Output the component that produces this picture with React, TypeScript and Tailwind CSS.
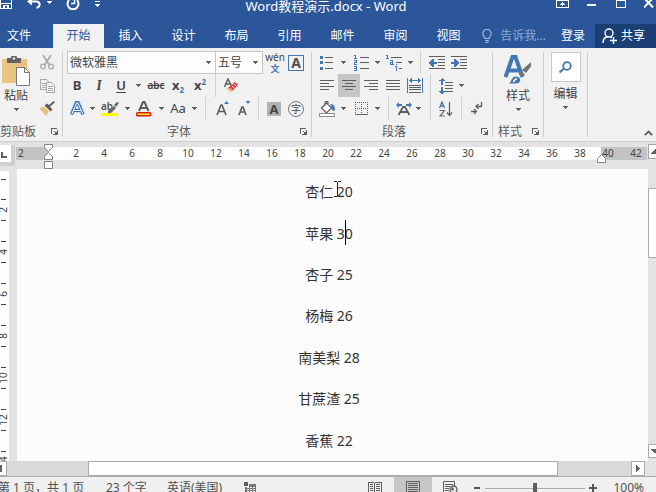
import { ReactNode } from "react";
import clsx from "clsx";

const tabs = ["开始", "插入", "设计", "布局", "引用", "邮件", "审阅", "视图"];

const lines = ["杏仁 20", "苹果 30", "杏子 25", "杨梅 26", "南美梨 28", "甘蔗渣 25", "香蕉 22"];

const rulerMarks = Array.from({ length: 21 }, (_, i) => (i + 1) * 2);
const sideMarks = [2, 4, 6, 8, 10, 12, 14];

const G = "#5f5f5f";
const B = "#4478b4";

function Icon({ w, h, crisp, children }: { w: number; h: number; crisp?: boolean; children: ReactNode }) {
  return (
    <svg
      width={w}
      height={h}
      viewBox={`0 0 ${w} ${h}`}
      fill="none"
      className="shrink-0"
      shapeRendering={crisp ? "crispEdges" : undefined}
    >
      {children}
    </svg>
  );
}

function Tool({ label, className, children }: { label: string; className: string; children: ReactNode }) {
  return (
    <button type="button" aria-label={label} className={clsx("flex h-full shrink-0 items-center justify-center", className)}>
      {children}
    </button>
  );
}

function Caret() {
  return (
    <Icon w={5} h={3} crisp>
      <path d="M0 0h5v1H0zM1 1h3v1H1zM2 2h1v1H2z" fill={G} />
    </Icon>
  );
}

function More({ className }: { className: string }) {
  return (
    <Tool label="更多" className={className}>
      <Caret />
    </Tool>
  );
}

function Split({ className }: { className: string }) {
  return (
    <div className={clsx("flex h-full shrink-0 justify-center", className)}>
      <div className="h-full w-px bg-[#d0d0d0]" />
    </div>
  );
}

function GroupLine() {
  return <div className="mt-px mb-1 w-px shrink-0 bg-[#cdcdcd]" />;
}

function GroupLabel({ name }: { name: string }) {
  return (
    <div className="flex h-[21px] items-center pt-[2px] text-[#5a5a5a]">
      <span className="flex-1 text-center">{name}</span>
      <Tool label={name + "设置"} className="w-4">
        <Icon w={7} h={7} crisp>
          <path d="M0 0h6v1H1v5H0zM3 3h1v1H3zM4 4h1v1H4zM6 2h1v5H2V6h4z" fill={G} />
          <path d="M5 4h1v2H4V5h1z" fill={G} />
        </Icon>
      </Tool>
    </div>
  );
}

function Row({ children }: { children: ReactNode }) {
  return <div className="flex h-[23px] items-center">{children}</div>;
}

function TitleBar() {
  return (
    <div className="relative flex h-6 items-start justify-between text-white">
      <div className="flex">
        <Tool label="保存" className="w-[13px]">
          <Icon w={13} h={10} crisp>
            <path d="M0 0h1v9H0zM11 0h1v9h-1zM0 8h12v1H0zM1 3h10v1H1zM3 5h6v4H7V6H5v3H3z" fill="#fff" />
          </Icon>
        </Tool>
        <Tool label="撤消" className="ml-3.5 w-4">
          <Icon w={16} h={10}>
            <path d="M3 1.500h6c4.500 0 5 5 .5 6.500" stroke="#fff" strokeWidth="2" />
            <path d="M0 1.500l5-4v8z" fill="#fff" />
          </Icon>
        </Tool>
        <Tool label="撤消列表" className="ml-px w-2.5">
          <Icon w={5} h={4} crisp>
            <path d="M0 1h5v1H0zM1 2h3v1H1zM2 3h1v1H2z" fill="#fff" />
          </Icon>
        </Tool>
        <Tool label="重复" className="ml-3 w-3.5">
          <Icon w={14} h={10}>
            <path d="M3 0A5.500 5.500 0 1 0 11 0" stroke="#fff" strokeWidth="2" />
            <path d="M8.500 0v3.500H5" stroke="#fff" strokeWidth="1.600" />
          </Icon>
        </Tool>
        <Tool label="自定义" className="ml-2.5 w-3.5">
          <Icon w={5} h={7} crisp>
            <path d="M0 1h5v1H0zM0 4h5v1H0zM1 5h3v1H1zM2 6h1v1H2z" fill="#fff" />
          </Icon>
        </Tool>
      </div>
      <h1 className="pointer-events-none absolute inset-x-0 top-0 pr-1 text-center text-[13px] leading-[13px]">
        Word教程演示.docx - Word
      </h1>
      <div className="flex items-start">
        <Tool label="功能区显示选项" className="w-[13px]">
          <Icon w={13} h={8} crisp>
            <path d="M0 0h1v8H0zM12 0h1v8h-1zM0 7h13v1H0zM0 0h13v1H0zM6 2h1v4H6zM5 3h3v1H5zM4 4h5v1H4z" fill="#fff" />
          </Icon>
        </Tool>
        <Tool label="最小化" className="ml-[18px] w-[9px]">
          <Icon w={9} h={8} crisp>
            <path d="M0 4h9v2H0z" fill="#fff" />
          </Icon>
        </Tool>
        <Tool label="最大化" className="ml-5 w-2.5">
          <Icon w={10} h={8} crisp>
            <path d="M0 0h1v8H0zM9 0h1v8H9zM0 7h10v1H0zM0 0h10v1H0z" fill="#fff" />
          </Icon>
        </Tool>
        <Tool label="关闭" className="mr-0.5 ml-[18px] w-[10px]">
          <Icon w={10} h={8}>
            <path d="M0-2l9 9.500M9-2L0 7.500" stroke="#fff" strokeWidth="2" />
          </Icon>
        </Tool>
      </div>
    </div>
  );
}

function TabBar() {
  return (
    <div className="flex h-6 items-stretch text-white">
      <button type="button" className="w-[53px] pr-[15px]">文件</button>
      <nav className="flex flex-1">
        {tabs.map((tab, i) => (
          <button
            key={tab}
            type="button"
            className={clsx("shrink-0", i === 0 ? "w-[51px] bg-[#f1f1f2] text-[#2b579a]" : "w-[53px]")}
          >
            {tab}
          </button>
        ))}
      </nav>
      <button type="button" className="flex items-center gap-2 pr-[15px] text-[#8ea9d0]">
        <Icon w={10} h={14}>
          <path d="M3 9.500C3 8 .8 7 .8 4.600a4.200 4.200 0 0 1 8.400 0C9.200 7 7 8 7 9.500zM3 11.500h4M3.500 13.300h3" stroke="#a3b8da" strokeWidth="1.200" />
        </Icon>
        告诉我...
      </button>
      <button type="button" className="pr-[10px]">登录</button>
      <button type="button" className="flex w-[61px] items-center gap-1 bg-[#1b3f75] pl-[7px]">
        <Icon w={15} h={16}>
          <circle cx="7" cy="5" r="4" stroke="#fff" strokeWidth="1.400" />
          <path d="M1 15c0-4 2-6 5-6.200M8 9c1 0 1.500.3 2 .8M8 12.500h7M11.500 9v7" stroke="#fff" strokeWidth="1.400" />
        </Icon>
        共享
      </button>
    </div>
  );
}

function Clipboard() {
  return (
    <section className="-ml-2.5 w-[72px] shrink-0">
      <div className="flex h-[69px] pl-2.5">
        <button type="button" className="flex w-8 shrink-0 flex-col items-center pt-[5px]">
          <Icon w={29} h={30}>
            <rect y="3" width="25" height="24" rx="1" fill="#eac282" />
            <path d="M5 2h4a3 3 0 0 1 6 0h4v5H5z" fill="#646464" />
            <circle cx="12" cy="2.500" r="1.200" fill="#eee" />
            <path d="M14.500 11.500h8l5 5v13h-13z" fill="#fff" stroke="#777" />
            <path d="M22.500 11.500v5h5" stroke="#777" />
          </Icon>
          <span className="mt-[2px] leading-4">粘贴</span>
          <span className="mt-[4px]"><Caret /></span>
        </button>
        <div className="w-[30px] shrink-0">
          <Row>
            <Tool label="剪切" className="w-[30px]">
              <Icon w={14} h={15}>
                <path d="M3 0l6.500 10M11 0L4.500 10" stroke="#a9a9a9" strokeWidth="1.800" />
                <circle cx="3" cy="11.500" r="2.300" stroke="#a9a9a9" strokeWidth="1.300" />
                <circle cx="11" cy="11.500" r="2.300" stroke="#a9a9a9" strokeWidth="1.300" />
              </Icon>
            </Tool>
          </Row>
          <Row>
            <Tool label="复制" className="w-[30px]">
              <Icon w={15} h={14} crisp>
                <path d="M.5.5h6l2 2v8h-8zM2 4.500h4M2 6.500h4M2 8.500h4" stroke="#aaa" />
                <path d="M6.500 3.500h5l3 3v7h-8z" fill="#f4f4f4" stroke="#aaa" />
                <path d="M8 7.500h5M8 9.500h5M8 11.500h5" stroke="#aaa" />
              </Icon>
            </Tool>
          </Row>
          <Row>
            <Tool label="格式刷" className="w-[30px]">
              <Icon w={16} h={15}>
                <path d="M0 7l5-1.500 5 5L7 15z" fill="#eac07c" />
                <path d="M5.500 4.500l6 6 2-2-2.500-3 5-4L14.500 0l-4.500 4-2-1.500z" fill="#5f5f5f" />
              </Icon>
            </Tool>
          </Row>
        </div>
      </div>
      <GroupLabel name="剪贴板" />
    </section>
  );
}

function Combo({ label, value, className }: { label: string; value: string; className: string }) {
  return (
    <label className={clsx("relative block h-full shrink-0", className)}>
      <span className="sr-only">{label}</span>
      <select className="h-full w-full appearance-none border border-[#c6c6c6] bg-[#fdfdfd] pl-[2px] outline-none">
        <option>{value}</option>
      </select>
      <span className="pointer-events-none absolute top-[10px] right-[5px]">
        <Caret />
      </span>
    </label>
  );
}

function FontGroup() {
  return (
    <section className="w-[248px] shrink-0">
      <div className="pl-1">
        <Row>
          <Combo label="字体" value="微软雅黑" className="w-[149px]" />
          <Combo label="字号" value="五号" className="-ml-px w-12" />
          <Tool label="拼音指南" className="w-6 flex-col">
            <span className="text-[10px] leading-[11px] text-[#444]">wén</span>
            <span className="text-[9px] leading-[11px] font-bold text-[#4478b4]">文</span>
          </Tool>
          <Tool label="字符边框" className="w-[18px]">
            <span className="w-4 border border-[#4478b4] text-center text-[14px] leading-[14px] font-bold text-[#505050]">A</span>
          </Tool>
        </Row>
        <Row>
          <Tool label="加粗" className="w-5"><b className="text-[13px]">B</b></Tool>
          <Tool label="倾斜" className="w-6"><span className="font-serif text-[13px] font-bold italic">I</span></Tool>
          <Tool label="下划线" className="w-5"><span className="text-[13px] font-semibold underline underline-offset-2">U</span></Tool>
          <More className="w-[14px]" />
          <Tool label="删除线" className="w-[22px]"><span className="text-[10px] font-semibold line-through">abc</span></Tool>
          <Tool label="下标" className="w-[22px]"><b className="text-[13px]">x</b><span className="mt-2 text-[8px] font-bold text-[#4478b4]">2</span></Tool>
          <Tool label="上标" className="w-[22px]"><b className="text-[13px]">x</b><span className="mb-2 text-[8px] font-bold text-[#4478b4]">2</span></Tool>
          <Split className="w-2" />
          <Tool label="清除格式" className="w-6">
            <Icon w={14} h={15}>
              <path d="M.5 9L4 1l3.500 7M2 6h4" stroke={G} strokeWidth="1.500" />
              <path d="M2 11l3-2 4 4-3 2z" fill="#ecd9b4" />
              <path d="M4 10l7-6 3 3-6 6z" fill="#e33b3b" />
              <path d="M6 10l2 2M8 8l2 2M10 6l2 2" stroke="#fff" />
            </Icon>
          </Tool>
        </Row>
        <Row>
          <Tool label="文本效果" className="w-5">
            <Icon w={15} h={15}>
              <path d="M1.500 13.500l5-12h1.500l5 12M3.800 9.500h7" stroke="#b9d2ee" strokeWidth="4.500" />
              <path d="M1.500 13.500l5-12h1.500l5 12M3.800 9.500h7" stroke="#3b6ea8" strokeWidth="3" />
              <path d="M1.800 13l5-11.300h1l5 11.300M3.800 9.500h7" stroke="#fff" strokeWidth="1" />
            </Icon>
          </Tool>
          <More className="w-[10px]" />
          <Tool label="突出显示" className="w-[26px]">
            <Icon w={18} h={16}>
              <path d="M0 12h17v3H0z" fill="#ff0" />
              <text x="0" y="9" fontSize="10" fontWeight="600" fill="#4f4f4f">ab</text>
              <path d="M7 10l6-5 2 2-5 5H7zM13 4l3-3 2 1-3 4z" fill="#666" />
            </Icon>
          </Tool>
          <More className="w-2" />
          <Tool label="字体颜色" className="w-[26px]">
            <Icon w={16} h={16}>
              <path d="M3 10L7 1h1.500l4 9M5 7h6" stroke={G} strokeWidth="2" />
              <rect x=".7" y="11.700" width="14" height="3" rx="1" fill="#ff0" stroke="#d8151d" strokeWidth="1.400" />
            </Icon>
          </Tool>
          <More className="w-2" />
          <Tool label="更改大小写" className="w-[26px]"><span className="text-[13px]">Aa</span></Tool>
          <More className="w-1.5" />
          <Split className="w-4" />
          <Tool label="增大字号" className="w-5">
            <Icon w={14} h={15}>
              <path d="M1 14L5 4h1l4 10M2.500 10.500h6" stroke={G} strokeWidth="1.700" />
              <path d="M8 3l2.500-3L13 3z" fill={B} />
            </Icon>
          </Tool>
          <Tool label="减小字号" className="w-[22px]">
            <Icon w={13} h={15}>
              <path d="M1 14l3-8h1l3 8M2 11h5" stroke={G} strokeWidth="1.700" />
              <path d="M7.500 0h5L10 3z" fill={B} />
            </Icon>
          </Tool>
          <Split className="w-1.5" />
          <Tool label="字符底纹" className="w-[26px]">
            <span className="w-[14px] bg-[#b2b2b2] text-center text-[13px] leading-[14px] font-bold">A</span>
          </Tool>
          <Tool label="带圈字符" className="w-[18px]">
            <span className="size-4 shrink-0 rounded-full border border-[#777] text-center text-[10px] leading-[14px]">字</span>
          </Tool>
        </Row>
      </div>
      <GroupLabel name="字体" />
    </section>
  );
}

function Lines({ d }: { d: string }) {
  return (
    <Icon w={14} h={11} crisp>
      <path d={d} stroke={G} />
    </Icon>
  );
}

function ParagraphGroup() {
  return (
    <section className="w-[180px] shrink-0">
      <div className="pl-1">
        <Row>
          <Tool label="项目符号" className="w-[22px]">
            <Icon w={14} h={15} crisp>
              <path d="M0 1h3v3H0zM0 6h3v3H0zM0 12h3v3H0z" fill={B} />
              <path d="M5 2.500h8M5 7.500h8M5 13.500h8" stroke={G} />
            </Icon>
          </Tool>
          <More className="w-[10px]" />
          <Tool label="编号" className="w-[26px]">
            <Icon w={15} h={17} crisp>
              <path d="M0 1.500h2M1.500 1v4M0 4.500h3M0 6.500h3M2.500 6v2M0 8.500h3M.5 8v3M0 10.500h3M0 12.500h3M0 14.500h3M0 16.500h3M2.500 12v5" stroke={B} />
              <path d="M6 3.500h9M6 8.500h9M6 14.500h9" stroke={G} />
            </Icon>
          </Tool>
          <More className="w-1.5" />
          <Tool label="多级列表" className="w-7">
            <Icon w={17} h={17} crisp>
              <path d="M0 1.500h2M1.500 1v4M0 4.500h3M4 6.500h3M6.500 6v5M4 8.500h3M4 10.500h4M4.500 8v3M9 12.500h2M10.500 12v5M10.500 10v1" stroke={B} />
              <path d="M5 3.500h11M10 8.500h6M13 14.500h3" stroke={G} />
            </Icon>
          </Tool>
          <More className="w-1" />
          <Split className="w-4" />
          <Tool label="减少缩进" className="w-[18px]">
            <Icon w={17} h={13} crisp>
              <path d="M0 .5h16M9 3.500h7M9 6.500h7M9 9.500h7M0 12.500h16" stroke={G} />
              <path d="M0 6h1V5h1V4h1V3h2v3h3v2H5v3H3v-1H2V9H1V8H0z" fill={B} />
            </Icon>
          </Tool>
          <Tool label="增加缩进" className="w-[26px]">
            <Icon w={17} h={13} crisp>
              <path d="M0 .5h16M9 3.500h7M9 6.500h7M9 9.500h7M0 12.500h16" stroke={G} />
              <path d="M8 6H7V5H6V4H5V3H3v3H0v2h3v3h2v-1h1V9h1V8h1z" fill={B} />
            </Icon>
          </Tool>
        </Row>
        <Row>
          <Tool label="左对齐" className="w-[22px]"><Lines d="M0 .5h14M0 3.500h9M0 6.500h14M0 9.500h9" /></Tool>
          <Tool label="居中" className="w-[22px] bg-[#c6c6c6]"><Lines d="M0 .5h14M3 3.500h8M0 6.500h14M3 9.500h8" /></Tool>
          <Tool label="右对齐" className="w-[22px]"><Lines d="M0 .5h14M5 3.500h9M0 6.500h14M5 9.500h9" /></Tool>
          <Tool label="两端对齐" className="w-[22px]"><Lines d="M0 .5h14M0 3.500h14M0 6.500h14M0 9.500h14" /></Tool>
          <Tool label="分散对齐" className="w-[22px]">
            <Icon w={16} h={15} crisp>
              <path d="M.5 0v15M15.500 0v15M3 2.500h10" stroke={B} />
              <path d="M2 2h1V1h1V0h1v5H4V4H3V3H2zM14 2h-1V1h-1V0h-1v5h1V4h1V3h1z" fill={B} />
              <path d="M2 7.500h12M2 9.500h12M2 11.500h12M2 14.500h12" stroke={G} />
            </Icon>
          </Tool>
          <Split className="w-2" />
          <Tool label="行距" className="w-6">
            <Icon w={14} h={16} crisp>
              <path d="M2 1h1V0h1v1h1v1h1v1H4v4H2V3H0V2h2zM2 9h2v4h2v1H5v1H4v1H2v-1H1v-1H0v-1h2z" fill={B} />
              <path d="M6 4.500h8M6 7.500h8M6 10.500h8M6 13.500h8" stroke={G} />
            </Icon>
          </Tool>
          <More className="w-1.5" />
        </Row>
        <Row>
          <Tool label="底纹" className="w-[22px]">
            <Icon w={17} h={16}>
              <path d="M2.500 7l5-5 5 5-5 5zM6 5V1.500C6 0 9 0 9 1.500V4" fill="#fff" stroke={G} strokeWidth="1.200" />
              <path d="M11 3c4 0 5 2 5 7l-3-1c0-2 0-3-2-6z" fill={B} />
              <path d="M.5 12.500h15v3H.5z" fill="#fff" stroke="#888" />
            </Icon>
          </Tool>
          <More className="w-[10px]" />
          <Tool label="边框" className="w-[26px]">
            <Icon w={13} h={13} crisp>
              <path d="M0 .5h13M.5 0v12M12.500 0v12M6.500 0v12M0 6.500h13" stroke={G} strokeDasharray="1 1" />
              <path d="M0 12.500h13" stroke={G} />
            </Icon>
          </Tool>
          <More className="w-1.5" />
          <Split className="w-4" />
          <Tool label="中文版式" className="w-4">
            <Icon w={16} h={14}>
              <path d="M2.500 13L7 5h2l4.500 8M4.500 10h7" stroke={G} strokeWidth="1.800" />
              <path d="M0 3l3-3v2h3v2H3v2zM16 3l-3-3v2h-3v2h3v2z" fill={B} />
            </Icon>
          </Tool>
          <More className="w-3" />
          <Split className="w-3" />
          <Tool label="排序" className="w-5">
            <Icon w={14} h={16}>
              <path d="M.5 7L3 .8 5.500 7M1.500 5h3" stroke={B} strokeWidth="1.300" />
              <path d="M.5 9.500h5L1 15h5" stroke="#6e6e6e" strokeWidth="1.200" />
              <path d="M10.500 1v13.500M8 11.500l2.500 3 2.500-3" stroke={G} strokeWidth="1.200" />
            </Icon>
          </Tool>
          <Split className="w-[10px]" />
          <Tool label="显示编辑标记" className="w-[22px]">
            <Icon w={12} h={13}>
              <path d="M10.500 0v4.500H5M7.500 2L5 4.500 7.500 7M0 9.500h5M3 7l2.500 2.500L3 12" stroke={G} strokeWidth="1.300" />
            </Icon>
          </Tool>
        </Row>
      </div>
      <GroupLabel name="段落" />
    </section>
  );
}

function Ribbon() {
  return (
    <div className="flex h-[94px] shrink-0 border-b border-[#cfcfcf] bg-[#f1f1f2] pt-[3px]">
      <Clipboard />
      <GroupLine />
      <FontGroup />
      <GroupLine />
      <ParagraphGroup />
      <GroupLine />
      <section className="w-[50px] shrink-0">
        <button type="button" className="flex h-[69px] w-full flex-col items-center pt-[4px]">
          <Icon w={28} h={31}>
            <path d="M1.500 22L8.500 2h3l7 20M4.500 15.500h11" stroke={B} strokeWidth="4" />
            <path d="M4 29c3-1 3-9 9-8 5 1 5 8-1 8z" fill={B} stroke="#f1f1f2" />
            <path d="M13 24c-2 0-3 1-3.500 3" stroke="#fff" strokeWidth="1.500" />
            <path d="M14.500 19l2.500-3 4 3.500-3 2.500zM18 15l9-8v4.500L22 18z" fill="#737373" />
          </Icon>
          <span className="mt-[2px] leading-4">样式</span>
          <span className="mt-[4px]"><Caret /></span>
        </button>
        <GroupLabel name="样式" />
      </section>
      <GroupLine />
      <section className="w-[43px] shrink-0">
        <button type="button" className="flex w-full flex-col items-center pt-px">
          <span className="flex size-[30px] items-center justify-center border border-[#c8c8c8] bg-white">
            <Icon w={13} h={13}>
              <circle cx="8" cy="5" r="3.800" stroke={B} strokeWidth="1.800" />
              <path d="M5 7.500l-4.500 4" stroke={B} strokeWidth="2.200" />
            </Icon>
          </span>
          <span className="mt-[4px] leading-4">编辑</span>
          <span className="mt-[4px]"><Caret /></span>
        </button>
      </section>
      <GroupLine />
      <button type="button" aria-label="折叠功能区" className="mr-[3px] mb-[5px] ml-auto self-end">
        <Icon w={9} h={6}>
          <path d="M.8 5.200L4.500 1.500l3.700 3.700" stroke={G} strokeWidth="1.800" />
        </Icon>
      </button>
    </div>
  );
}

function TopRuler() {
  return (
    <div className="flex h-[27px] shrink-0 items-start">
      <div className="mt-[3px] flex h-[21px] w-[15px] shrink-0 items-start border-r-4 border-b-4 border-[#d0d0d0] bg-white pt-[7px] pl-px">
        <Icon w={6} h={6} crisp>
          <path d="M0 0h2v4h4v2H0z" fill={G} />
        </Icon>
      </div>
      <div className="relative mt-[5px] ml-px flex h-[13px] min-w-0 flex-1 bg-[#fdfdfd] text-[10px] leading-[13px]">
        <div className="w-8 shrink-0 bg-[#c3c3c3] pl-[2px]">2</div>
        <div className="absolute inset-y-0 right-0 w-[46px] bg-[#c3c3c3]" />
        <div className="relative flex flex-1 overflow-hidden pl-[14px]">
          {rulerMarks.map((n) => (
            <span key={n} className="w-7 shrink-0 text-center">{n}</span>
          ))}
        </div>
        <div className="absolute -top-[3px] left-[28px]">
          <Icon w={9} h={25}>
            <path d="M.5.5h8v3l-4 4-4-4zM.5 15.500v-3l4-4 4 4v3zM.5 17.500h8v7h-8z" fill="#fff" stroke="#858585" />
          </Icon>
        </div>
        <div className="absolute top-[7px] right-[41px]">
          <Icon w={9} h={9}>
            <path d="M.5 8.500v-4l4-4 4 4v4z" fill="#fff" stroke="#858585" />
          </Icon>
        </div>
      </div>
      <div className="mt-[2px] ml-px flex h-[15px] w-2 shrink-0 items-center justify-end border border-r-0 border-[#a5a5a5] bg-white">
        <Icon w={5} h={5} crisp>
          <path d="M4 0h1v5H0V4h1V3h1V2h1V1h1z" fill={G} />
        </Icon>
      </div>
    </div>
  );
}

function SideRuler() {
  return (
    <div className="mt-[2px] w-[9px] shrink-0 overflow-hidden bg-[#fdfdfd] text-[10px]">
      <div className="h-[18px] px-px pt-[8px]">
        <div className="h-px w-[5px] bg-[#444]" />
      </div>
      {sideMarks.map((n) => (
        <div key={n} className="flex h-[42px] flex-col justify-center">
          <div className="ml-px h-px w-[5px] bg-[#444]" />
          <div className="flex h-5 w-[6px] items-center justify-center">
            <span className="-rotate-90 leading-none">{n}</span>
          </div>
          <div className="ml-px h-px w-[5px] bg-[#444]" />
        </div>
      ))}
    </div>
  );
}

function Page() {
  return (
    <main className="ml-2 flex min-w-0 flex-1 flex-col bg-[#fcfcfc] pt-[2px] pr-[38px] pl-[31px] text-[14px] text-[#333]">
      {lines.map((line, i) => (
        <p key={line} className="flex flex-1 items-center justify-center">
          <span className="relative">
            {line}
            {i === 0 && (
              <span className="absolute top-0 right-[11px]">
                <Icon w={9} h={17} crisp>
                  <path d="M1 .5h3M5 .5h3M4.500 1v14M1 15.500h3M5 15.500h3" stroke="#222" />
                </Icon>
              </span>
            )}
            {i === 1 && <span className="absolute -top-[3px] right-[7px] h-[25px] w-px bg-black" />}
          </span>
        </p>
      ))}
    </main>
  );
}

function SideScroll() {
  return (
    <div className="flex w-2 shrink-0 flex-col bg-[#e3e3e3]">
      <div className="mt-[19px] h-[70px] border border-r-0 border-[#ababab] bg-white" />
      <div className="mt-auto mb-[3px] flex h-[14px] items-center justify-end border border-r-0 border-[#ababab] bg-white">
        <Icon w={5} h={4} crisp>
          <path d="M0 0h5v4H3V3H2V2H1V1H0z" fill={G} />
        </Icon>
      </div>
    </div>
  );
}

function BottomScroll() {
  return (
    <div className="mr-[11px] flex h-[15px] shrink-0 bg-[#d9d9d9]">
      <div className="flex w-[7px] items-center border border-l-0 border-[#ababab] bg-white">
        <div className="h-[7px] w-0.5 bg-[#666]" />
      </div>
      <div className="mr-[73px] ml-[81px] flex-1 border border-[#ababab] bg-white" />
      <button type="button" aria-label="向右滚动" className="flex w-[14px] items-center justify-center border border-[#ababab] bg-white">
        <Icon w={4} h={7} crisp>
          <path d="M0 0h1v1h1v1h1v1h1v1H3v1H2v1H1v1H0z" fill={G} />
        </Icon>
      </button>
    </div>
  );
}

function StatusBar() {
  return (
    <footer className="flex h-4 shrink-0 items-start overflow-hidden border-t border-[#ababab] bg-[#f0f0f0] text-[#505050]">
      <span className="-ml-0.5 w-[108px] shrink-0 leading-[22px] whitespace-nowrap">第 1 页，共 1 页</span>
      <span className="w-[61px] shrink-0 leading-[22px]">23 个字</span>
      <span className="w-[76px] shrink-0 leading-[22px]">英语(美国)</span>
      <span className="pt-[4px]">
        <Icon w={13} h={12} crisp>
          <path d="M2 3h11v9H2z" fill="#777" />
          <path d="M4 6h2v1H4zM7 6h2v1H7zM10 6h2v1h-2zM4 8h2v1H4zM7 8h2v1H7zM10 8h2v1h-2zM4 10h2v1H4zM7 10h2v1H7zM10 10h2v1h-2z" fill="#fff" />
          <circle cx="3" cy="3" r="3" fill={G} stroke="#f0f0f0" />
        </Icon>
      </span>
      <div className="ml-auto flex h-full shrink-0">
        <button type="button" aria-label="阅读视图" className="flex w-[39px] justify-center pt-[4px]">
          <Icon w={14} h={12} crisp>
            <path d="M.5 1.500h5l1 1 1-1h6v10H.5zM6.500 2v10" stroke={G} />
            <path d="M2 3.500h3M2 5.500h3M2 7.500h3M2 9.500h3M8 3.500h4M8 5.500h4M8 7.500h4M8 9.500h4" stroke={G} />
          </Icon>
        </button>
        <button type="button" aria-label="页面视图" className="flex w-[38px] justify-center bg-[#c6c6c6] pt-[4px]">
          <Icon w={14} h={12} crisp>
            <path d="M.5.5h13v11H.5zM2 2.500h10M2 4.500h10M2 6.500h10M2 8.500h10M2 10.500h10" stroke={G} />
          </Icon>
        </button>
        <button type="button" aria-label="Web 版式" className="flex w-[37px] justify-center pt-[4px]">
          <Icon w={15} h={12}>
            <path d="M.5 12V.5h11V5M2 3.500h8M2 5.500h5M2 7.500h4M2 9.500h4" stroke={G} />
            <circle cx="10.500" cy="8.500" r="3.500" fill="#f0f0f0" stroke={G} strokeWidth="1.300" />
            <path d="M8 7.500l2-1.500 1 2.500-1.500 2z" fill={G} />
          </Icon>
        </button>
        <button type="button" aria-label="缩小" className="flex w-4 justify-center pt-[10px]">
          <span className="h-0.5 w-1.5 bg-[#555]" />
        </button>
        <input
          type="range"
          aria-label="缩放"
          min={10}
          max={190}
          defaultValue={100}
          className="mt-[3px] h-4 w-[100px] appearance-none bg-transparent [&::-webkit-slider-runnable-track]:h-px [&::-webkit-slider-runnable-track]:bg-[#aaa] [&::-webkit-slider-thumb]:-mt-[5px] [&::-webkit-slider-thumb]:h-[11px] [&::-webkit-slider-thumb]:w-1 [&::-webkit-slider-thumb]:appearance-none [&::-webkit-slider-thumb]:bg-[#5f5f5f]"
        />
        <button type="button" aria-label="放大" className="flex w-4 justify-center pt-[7px]">
          <Icon w={8} h={8} crisp>
            <path d="M0 3h3V0h2v3h3v2H5v3H3V5H0z" fill="#555" />
          </Icon>
        </button>
        <span className="w-[55px] pr-3 text-right leading-[22px]">100%</span>
      </div>
    </footer>
  );
}

export default function App() {
  return (
    <div className="flex h-screen w-full flex-col overflow-hidden bg-[#e3e3e3] font-['Noto_Sans','Noto_Sans_CJK_SC',sans-serif] text-[12px] text-[#444]">
      <header className="shrink-0 bg-[#2b579a]">
        <TitleBar />
        <TabBar />
      </header>
      <Ribbon />
      <TopRuler />
      <div className="flex min-h-0 flex-1">
        <SideRuler />
        <Page />
        <SideScroll />
      </div>
      <BottomScroll />
      <StatusBar />
    </div>
  );
}
